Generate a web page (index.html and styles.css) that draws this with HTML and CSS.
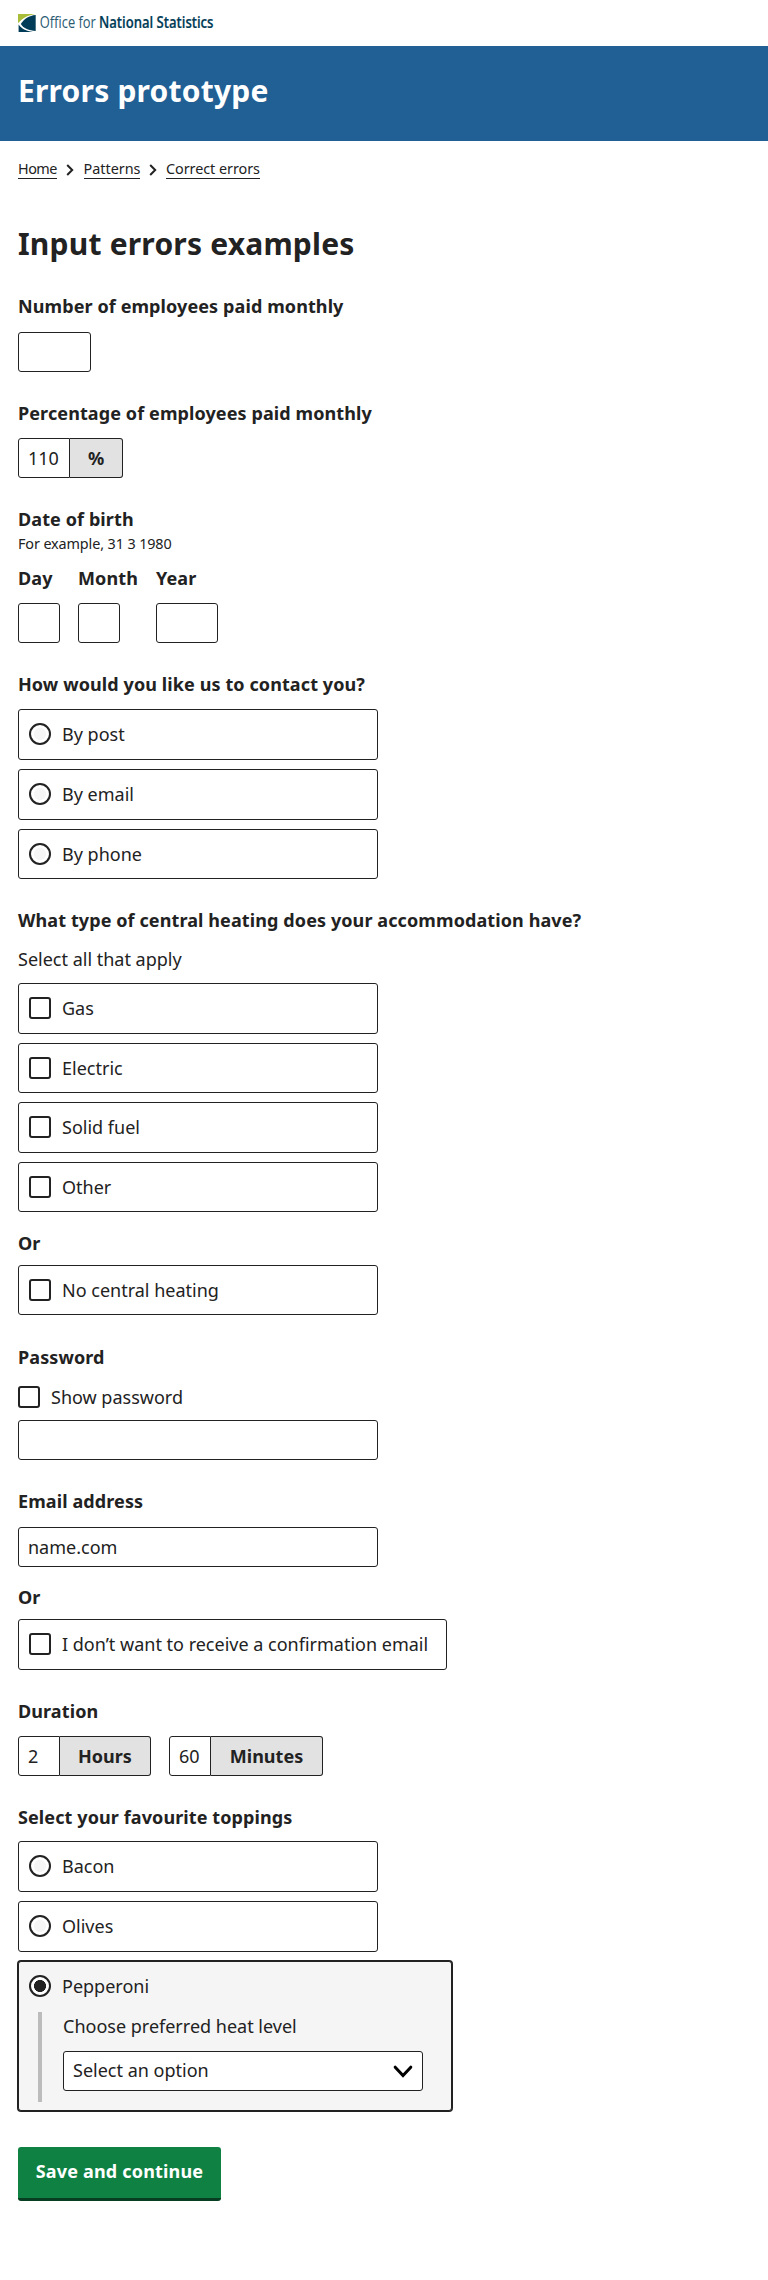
FILE: index.html
```html
<!DOCTYPE html>
<html lang="en">
<head>
<meta charset="utf-8">
<title>Errors prototype</title>
<link rel="stylesheet" href="styles.css">
</head>
<body>
<header>
  <div class="brand">
    <svg class="logo" width="200" height="32" viewBox="0 -6 200 32" role="img" aria-label="Office for National Statistics">
      <path d="M0 3h17.500C10 4.200 4.500 7 .8 11.500L0 12z" fill="#a8bd3a"/>
      <path d="M17.700 4v16C11 19.500 5.500 17.500 2.800 13 6 8 11 4.500 17.700 4z" fill="#003c57"/>
      <path d="M.6 13.600C3.500 18 8 20 15 21H.6z" fill="#003c57"/>
      <text class="logo-light" x="21.800" y="17.300" textLength="56" lengthAdjust="spacingAndGlyphs">Office for</text>
      <text class="logo-bold" x="81" y="17.300" textLength="114.500" lengthAdjust="spacingAndGlyphs">National Statistics</text>
    </svg>
  </div>
  <div class="banner"><div class="banner-title">Errors prototype</div></div>
</header>
<nav class="crumbs">
  <a class="crumb-home">Home</a>
  <svg width="8" height="12" viewBox="0 0 8 12"><path d="M1.200 1l5 5-5 5" fill="none" stroke="#222" stroke-width="2"/></svg>
  <a class="crumb-patterns">Patterns</a>
  <svg width="8" height="12" viewBox="0 0 8 12"><path d="M1.200 1l5 5-5 5" fill="none" stroke="#222" stroke-width="2"/></svg>
  <a class="crumb-errors">Correct errors</a>
</nav>
<main>
  <h1>Input errors examples</h1>

  <section class="field field-number">
    <label class="label gap-13" for="employees">Number of employees paid monthly</label>
    <input class="input w-4" id="employees" type="text">
  </section>

  <section class="field field-percent">
    <label class="label gap-12" for="percent">Percentage of employees paid monthly</label>
    <div class="unit"><input class="input w-3" id="percent" type="text" value="110"><span class="suffix suffix-percent">%</span></div>
  </section>

  <section class="field field-date">
    <div class="label">Date of birth</div>
    <div class="hint">For example, 31 3 1980</div>
    <div class="row">
      <div class="col"><label class="label gap-12" for="day">Day</label><input class="input w-2" id="day" type="text"></div>
      <div class="col col-month"><label class="label gap-12" for="month">Month</label><input class="input w-2" id="month" type="text"></div>
      <div class="col"><label class="label gap-12" for="year">Year</label><input class="input w-year" id="year" type="text"></div>
    </div>
  </section>

  <section class="field field-contact">
    <div class="label gap-contact">How would you like us to contact you?</div>
    <div class="options">
      <label class="option"><span class="radio"></span>By post</label>
      <label class="option"><span class="radio"></span>By email</label>
      <label class="option"><span class="radio"></span>By phone</label>
    </div>
  </section>

  <section class="field field-heating">
    <div class="label gap-13">What type of central heating does your accommodation have?</div>
    <div class="help">Select all that apply</div>
    <div class="options">
      <label class="option"><span class="check"></span>Gas</label>
      <label class="option"><span class="check"></span>Electric</label>
      <label class="option"><span class="check"></span>Solid fuel</label>
      <label class="option"><span class="check"></span>Other</label>
    </div>
    <div class="label or">Or</div>
    <label class="option"><span class="check"></span>No central heating</label>
  </section>

  <section class="field field-password">
    <label class="label" for="password">Password</label>
    <label class="toggle"><span class="check"></span>Show password</label>
    <input class="input w-full" id="password" type="password">
  </section>

  <section class="field field-email">
    <label class="label gap-13" for="email">Email address</label>
    <input class="input w-full" id="email" type="text" value="name.com">
    <div class="label or">Or</div>
    <label class="option option-wide"><span class="check"></span>I don’t want to receive a confirmation email</label>
  </section>

  <section class="field field-duration">
    <div class="label gap-12">Duration</div>
    <div class="row">
      <div class="unit"><input class="input w-2" type="text" value="2"><span class="suffix suffix-hours">Hours</span></div>
      <div class="unit"><input class="input w-2" type="text" value="60"><span class="suffix suffix-minutes">Minutes</span></div>
    </div>
  </section>

  <section class="field field-toppings">
    <div class="label gap-toppings">Select your favourite toppings</div>
    <div class="options">
      <label class="option"><span class="radio"></span>Bacon</label>
      <label class="option"><span class="radio"></span>Olives</label>
      <div class="option option-open">
        <label class="option-head"><span class="radio radio-on"></span>Pepperoni</label>
        <div class="reveal">
          <div class="help">Choose preferred heat level</div>
          <div class="select"><span>Select an option</span>
            <svg width="20" height="14" viewBox="0 0 20 14"><path d="M2.200 2.200L10 10.500l7.800-8.300" fill="none" stroke="#000" stroke-width="3" stroke-linecap="round"/></svg>
          </div>
        </div>
      </div>
    </div>
  </section>

  <button class="button" type="button">Save and continue</button>
</main>
</body>
</html>
```
FILE: styles.css
```css
* { box-sizing: border-box; }
body {
  margin: 0;
  background: #fff;
  color: #222;
  font: 18px/26px "Noto Sans", sans-serif;
}
.brand { height: 46px; padding: 5px 18px 0; }
.logo { display: block; overflow: visible; }
.logo text { font-family: "Open Sans", sans-serif; font-size: 15.500px; fill: #003c57; }
.logo .logo-light { font-weight: 400; fill: #2a5b72; }
.logo .logo-bold { font-weight: 600; stroke: #003c57; stroke-width: .2px; }
.banner { height: 95px; padding: 25px 18px 0; background: #206095; }
.banner-title { color: #fff; font-size: 30px; font-weight: 700; line-height: 40px; letter-spacing: .2px; }
.crumbs {
  display: flex;
  align-items: flex-start;
  height: 79px;
  padding: 18px 18px 0;
  font-size: 14.400px;
  line-height: 19px;
}
.crumbs a { border-bottom: 1px solid #222; white-space: nowrap; }
.crumb-home { width: 39px; letter-spacing: -.5px; }
.crumb-patterns { width: 56px; }
.crumb-errors { width: 94px; letter-spacing: -.05px; }
.crumbs svg { margin: 5px 9.500px 0 9px; }
main { padding: 0 18px; }
h1 { margin: 0; padding-top: 4px; height: 73px; font-size: 30px; line-height: 40px; letter-spacing: .2px; }
.field { display: flow-root; }
.field-number { height: 107px; }
.field-percent { height: 106px; }
.field-date { height: 165px; }
.field-contact { height: 236px; }
.field-heating { height: 437px; }
.field-password { height: 144px; }
.field-email { height: 210px; }
.field-duration { height: 106px; }
.field-toppings { height: 343px; }
.label { display: block; font-weight: 700; letter-spacing: .1px; }
.gap-12 { margin-bottom: 12px; }
.gap-13 { margin-bottom: 13px; }
.gap-contact { margin-bottom: 12.400px; }
.gap-toppings { margin-bottom: 11.400px; }
.hint { font-size: 14.400px; line-height: 21px; margin: 1px 0 11px; letter-spacing: -.12px; }
.help { line-height: 26px; }
.input {
  display: block;
  height: 40px;
  margin: 0;
  padding: 0 9px;
  border: 1px solid #222;
  border-radius: 3px;
  background: #fff;
  color: #222;
  font: inherit;
}
.w-2 { width: 42px; }
.w-3 { width: 52px; }
.w-year { width: 62px; }
.w-4 { width: 73px; }
.w-full { width: 360px; }
.row { display: flex; gap: 18px; }
.col-month { width: 60px; }
.unit { display: flex; }
.unit .input { border-radius: 3px 0 0 3px; padding-right: 0; }
.suffix {
  height: 40px;
  border: 1px solid #222;
  border-left: 0;
  border-radius: 0 3px 3px 0;
  background: #e2e2e3;
  font-weight: 700;
  line-height: 38px;
  text-align: center;
}
.suffix-percent { width: 53px; }
.suffix-hours { width: 91px; }
.suffix-minutes { width: 112px; }
.options { display: grid; gap: 9px; justify-items: start; }
.field-heating .options { margin-top: 11px; }
.option {
  display: flex;
  width: 360px;
  height: 50.600px;
  padding: 12px 10px 11px;
  border: 1px solid #222;
  border-radius: 3px;
  line-height: 25.200px;
}
.option-wide { width: 429px; }
.check, .radio {
  flex: none;
  width: 22px;
  height: 22px;
  margin: 1.100px 11px 0 0;
  border: 2px solid #222;
  border-radius: 3px;
  background: #fff;
}
.radio { border-radius: 50%; background: radial-gradient(circle, #f5f5f6 5.700px, #fff 6.300px); }
.radio-on { background: radial-gradient(circle, #222 5.700px, #fff 6.300px); }
.or { margin: 17.200px 0 9px; }
.field-email .or { margin-top: 17px; }
.toggle { display: flex; margin: 14px 0 10px; }
.toggle .check { margin: 2px 11px 0 0; }
.option-open {
  display: block;
  width: 434px;
  height: 150px;
  background: #f5f5f6;
  box-shadow: 0 0 0 1px #222;
}
.option-head { display: flex; }
.reveal {
  height: 90px;
  margin: 12.800px 0 0 9px;
  padding: 1px 0 0 21px;
  border-left: 4px solid #bcbcbd;
}
.select {
  display: flex;
  align-items: center;
  justify-content: space-between;
  width: 360px;
  height: 40px;
  margin-top: 12px;
  padding: 0 9px;
  border: 1px solid #222;
  border-radius: 3px;
  background: #fff;
}
.select svg { margin-top: 3px; }
.button {
  display: block;
  width: 203px;
  height: 54px;
  padding: 0 0 3px;
  border: 0;
  border-bottom: 3px solid #073d20;
  border-radius: 3px;
  background: #0f8243;
  color: #fff;
  font: 700 18px/26px "Noto Sans", sans-serif;
  letter-spacing: .18px;
}
```
